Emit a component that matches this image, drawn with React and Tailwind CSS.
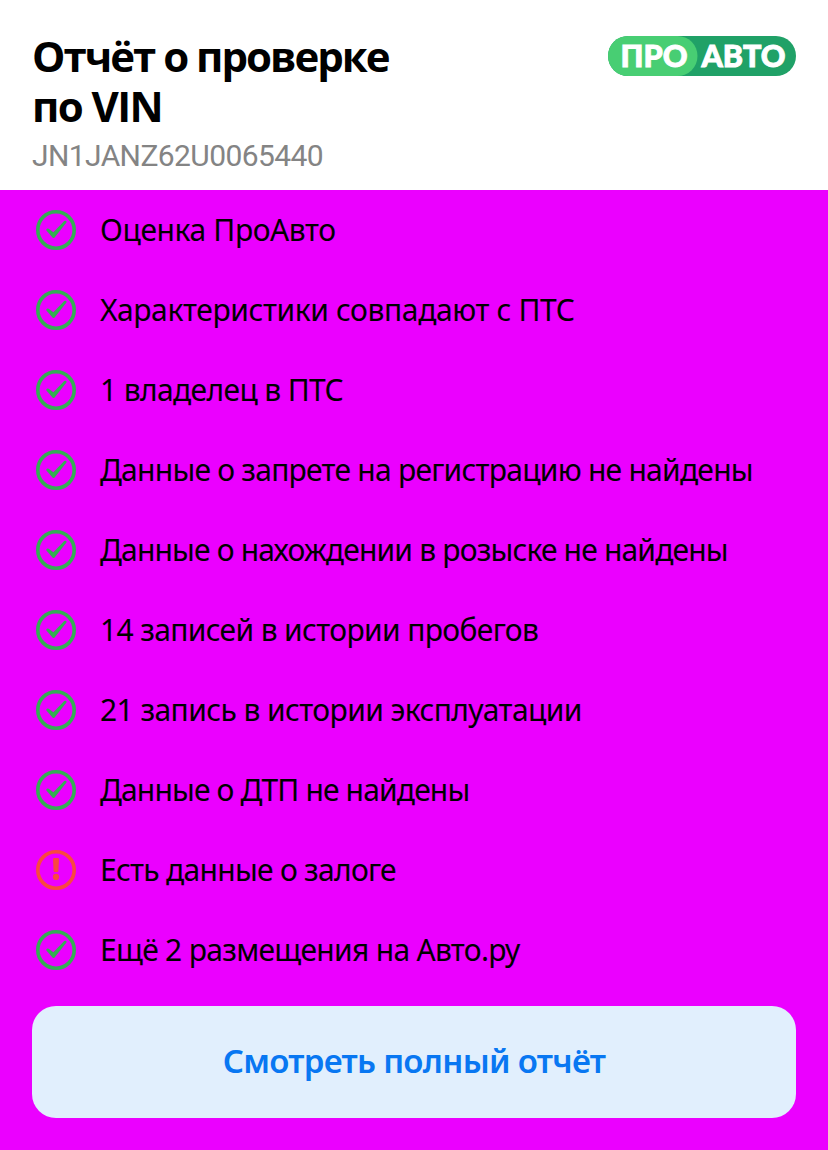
const rows = [
  { text: "Оценка ПроАвто", tracking: "tracking-[-0.38px]" },
  { text: "Характеристики совпадают с ПТС", tracking: "tracking-[-0.38px]" },
  { text: "1 владелец в ПТС", tracking: "tracking-[-0.63px]" },
  { text: "Данные о запрете на регистрацию не найдены", tracking: "tracking-[-0.75px]" },
  { text: "Данные о нахождении в розыске не найдены", tracking: "tracking-[-0.82px]" },
  { text: "14 записей в истории пробегов", tracking: "tracking-[-0.64px]" },
  { text: "21 запись в истории эксплуатации", tracking: "tracking-[-0.58px]" },
  { text: "Данные о ДТП не найдены", tracking: "tracking-[-0.85px]" },
  { text: "Есть данные о залоге", tracking: "tracking-[-0.71px]", warning: true },
  { text: "Ещё 2 размещения на Авто.ру", tracking: "tracking-[-0.7px]" },
];

function CheckIcon() {
  return (
    <svg className="h-10 w-10 shrink-0" viewBox="0 0 40 40" fill="none" aria-hidden="true">
      <circle cx="20" cy="20" r="18.2" stroke="#35ad54" strokeWidth="3.6" />
      <path d="M10.4 20.6Q9.8 19.3 11 18.8Q12.3 18.3 13.4 19.2L17.4 22.3L28.2 11.1Q29.2 10.3 30.1 11Q31 11.8 30.3 12.8L18.6 27.5Q17.5 28.5 16.5 27.5Z" fill="#35ad54" />
    </svg>
  );
}

function WarningIcon() {
  return (
    <svg className="h-10 w-10 shrink-0" viewBox="0 0 40 40" fill="none" aria-hidden="true">
      <circle cx="20" cy="20" r="18.2" stroke="#f9483f" strokeWidth="3.6" />
      <path d="M17 9.2Q17 8 18.2 8H21.8Q23 8 23 9.2L22.4 20.8Q22.3 22 21.2 22H18.8Q17.7 22 17.6 20.8Z" fill="#f9483f" />
      <circle cx="20" cy="26.9" r="3.1" fill="#f9483f" />
    </svg>
  );
}

function Logo() {
  return (
    <svg className="h-10 w-[188px] shrink-0" viewBox="0 0 188 40" role="img" aria-label="ПРО АВТО">
      <rect width="188" height="40" rx="20" fill="#20a167" />
      <rect width="89.5" height="40" rx="20" fill="#48ce73" />
      <g fill="#fff" stroke="#fff" strokeWidth="0.9" className="font-['Lato','Open_Sans',sans-serif] text-[30px] font-black">
        <text x="12.5" y="30.6" textLength="67" lengthAdjust="spacingAndGlyphs">ПРО</text>
        <text x="93.5" y="30.6" textLength="84" lengthAdjust="spacingAndGlyphs">АВТО</text>
      </g>
    </svg>
  );
}

export default function App() {
  return (
    <main className="flex h-[1150px] w-[828px] flex-col bg-[#eb00ff] font-['Noto_Sans',sans-serif] text-black">
      <header className="flex h-[190px] items-start justify-between bg-white px-8 pt-[31px]">
        <div>
          <h1 className="font-['Open_Sans',sans-serif] text-[42px] leading-[50px] font-bold tracking-[-2px]">
            Отчёт о проверке
            <br />
            <span className="tracking-[-1.6px]">по VIN</span>
          </h1>
          <p className="pt-px font-['Roboto',sans-serif] text-[30px] leading-[48px] tracking-[-0.6px] text-[#848484]">JN1JANZ62U0065440</p>
        </div>
        <div className="pt-[5px]">
          <Logo />
        </div>
      </header>
      <ul className="flex flex-col">
        {rows.map((row) => (
          <li key={row.text} className="flex h-20 items-center gap-6 px-9">
            {row.warning ? <WarningIcon /> : <CheckIcon />}
            <span className={`pb-px text-[30px] leading-10 whitespace-nowrap ${row.tracking}`}>{row.text}</span>
          </li>
        ))}
      </ul>
      <div className="px-8 pt-4">
        <button className="h-28 w-full rounded-3xl bg-[#e1effd] pb-0.5 text-[33px] font-semibold tracking-[-0.7px] text-[#0877f2]">Смотреть полный отчёт</button>
      </div>
    </main>
  );
}
